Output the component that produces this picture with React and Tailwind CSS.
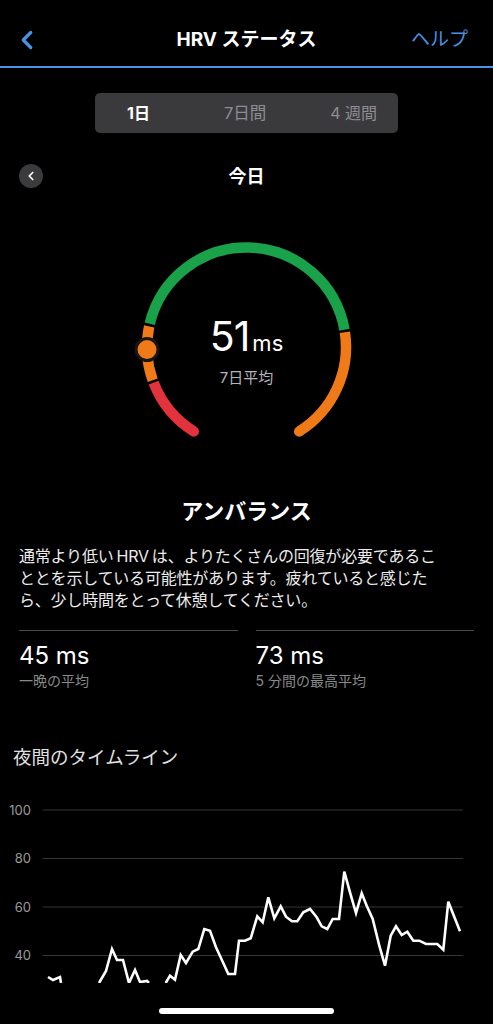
import { ChevronLeft } from "lucide-react";

const FONT = { fontFamily: 'Inter, "Noto Sans CJK JP", sans-serif' };

const CX = 246.5;
const CY = 159;
const R = 99.5;

function pt(deg) {
    const a = (deg * Math.PI) / 180;
    return [CX + R * Math.sin(a), CY - R * Math.cos(a)];
}

function arc(a1, a2) {
    const [x1, y1] = pt(a1);
    const [x2, y2] = pt(a2);
    const large = a2 - a1 > 180 ? 1 : 0;
    return `M ${x1} ${y1} A ${R} ${R} 0 ${large} 1 ${x2} ${y2}`;
}

const GREEN = "#1aa24a";
const ORANGE = "#f07a17";
const RED = "#e2323c";

// nightly timeline, page coordinates
const segs = [
    [[48, 978], [53, 981], [60, 978], [61, 984]],
    [[99, 984], [106, 972], [112, 950], [117, 961], [123, 961], [129, 984], [135, 971], [140, 983], [147, 982], [149, 984]],
    [
        [165.7, 984], [170, 976.7], [175, 980.7], [180.7, 956], [186, 964], [192.7, 952.7], [198.3, 950], [204.3, 930],
        [210, 931.7], [216, 948.3], [222.7, 962.7], [228.3, 975], [235, 975], [239, 941.7], [245, 941.7], [250.7, 939.3],
        [257.3, 917.3], [262.7, 923.3], [268.3, 898.3], [274.3, 919.3], [280.7, 907.3], [286, 917.7], [292, 922.3],
        [297.3, 922.3], [303.3, 913.3], [310, 910], [316.7, 918.3], [321.7, 927.3], [327.3, 930], [332.7, 920], [339, 920],
        [344.3, 872.7], [350, 893.3], [356, 914], [361.7, 894.3], [366.7, 906.7], [372.7, 920], [379.3, 946.7],
        [385, 966.7], [390.7, 936.7], [396, 927.3], [401.7, 936], [407.3, 932.7], [413.3, 941.7], [419.3, 941.7],
        [426, 945], [432.7, 945], [437.3, 945], [443.3, 950.7], [448.3, 902.7], [460, 932.3],
    ],
];

const grid = [
    { v: "100", y: 811 },
    { v: "80", y: 859.5 },
    { v: "60", y: 908 },
    { v: "40", y: 956.5 },
];

function Gauge() {
    const [sx, sy] = pt(-148);
    const [ex, ey] = pt(148);
    const [mx, my] = pt(-91.5);
    return (
        <div className="relative h-[260px]">
            <svg width="493" height="260" className="block">
                <path d={arc(-148, -111)} stroke={RED} strokeWidth="10.5" fill="none" />
                <path d={arc(-109.5, -78)} stroke={ORANGE} strokeWidth="10.5" fill="none" />
                <path d={arc(-76.5, 80)} stroke={GREEN} strokeWidth="10.5" fill="none" />
                <path d={arc(81.5, 148)} stroke={ORANGE} strokeWidth="10.5" fill="none" />
                <circle cx={sx} cy={sy} r="5.25" fill={RED} />
                <circle cx={ex} cy={ey} r="5.25" fill={ORANGE} />
                <circle cx={mx} cy={my} r="11" fill={ORANGE} stroke="#161616" strokeWidth="3" />
            </svg>
            <div className="absolute inset-x-0 top-[128px] flex flex-col items-center">
                <div className="flex items-baseline text-white">
                    <span className="text-[41px] leading-[40px] tracking-[-1px]">51</span>
                    <span className="text-[22px] leading-[40px] ml-[3px]">ms</span>
                </div>
                <div className="mt-[5px] text-[15px] leading-[20px] text-[#b5b5b5]">7日平均</div>
            </div>
        </div>
    );
}

function Chart() {
    return (
        <svg width="493" height="234" viewBox="0 790 493 234" className="block">
            <defs>
                <clipPath id="plot">
                    <rect x="0" y="790" width="493" height="194" />
                </clipPath>
            </defs>
            {grid.map((g) => (
                <g key={g.v}>
                    <line x1="42.5" x2="463" y1={g.y} y2={g.y} stroke="#353535" strokeWidth="1" />
                    <text x="31" y={g.y + 4.5} textAnchor="end" fontSize="13" fill="#9a9a9a" style={FONT}>
                        {g.v}
                    </text>
                </g>
            ))}
            <g clipPath="url(#plot)">
                {segs.map((s, i) => (
                    <polyline
                        key={i}
                        points={s.map((p) => p.join(",")).join(" ")}
                        fill="none"
                        stroke="#ffffff"
                        strokeWidth="2.6"
                        strokeLinejoin="miter"
                    />
                ))}
            </g>
        </svg>
    );
}

export default function App() {
    return (
        <div className="relative h-[1024px] w-[493px] overflow-hidden bg-black text-white" style={FONT}>
            {/* header */}
            <div className="grid h-[66px] grid-cols-[1fr_auto_1fr] items-center pt-[14px] px-[12px]">
                <ChevronLeft size={30} strokeWidth={2.6} className="text-[#4a92e3]" />
                <div className="text-[19px] font-bold leading-[26px]">HRV ステータス</div>
                <div className="mr-[13px] justify-self-end text-[19px] leading-[26px] text-[#4a92e3]">ヘルプ</div>
            </div>
            <div className="h-[2px] bg-[#4a92e3]" />

            {/* range tabs */}
            <div className="mt-[25px] flex justify-center">
                <div className="flex h-[40px] w-[303px] items-center rounded-[5px] bg-[#3a3a3c] pl-[32px] text-[16px]">
                    <span className="font-bold text-white">1日</span>
                    <span className="ml-[74px] text-[16.5px] text-[#8d8d92]">7日間</span>
                    <span className="ml-[64px] text-[#8d8d92]">4 週間</span>
                </div>
            </div>

            {/* day row */}
            <div className="relative mt-[31px] flex h-[24px] items-center justify-center">
                <div className="absolute left-[19px] top-0 flex h-[24px] w-[24px] items-center justify-center rounded-full bg-[#3b3b3d]">
                    <ChevronLeft size={14} strokeWidth={3} className="text-white" />
                </div>
                <span className="text-[18px] font-bold">今日</span>
            </div>

            <Gauge />

            <div className="mt-[48px] text-center text-[22px] font-bold leading-[30px]">アンバランス</div>

            <div className="mt-[19px] px-[19px] text-[16px] leading-[22px] tracking-[-0.2px] text-[#ececec]">
                <div>
                    通常より低い<span className="mx-[3px]">HRV</span>は、よりたくさんの回復が必要であるこ
                </div>
                <div>ととを示している可能性があります。疲れていると感じた</div>
                <div>ら、少し時間をとって休憩してください。</div>
            </div>

            {/* stats */}
            <div className="mt-[19px] grid grid-cols-2 gap-[18px] px-[19px]">
                <div className="border-t border-[#4a4a4a] pt-[10px]">
                    <div className="text-[24px] leading-[30px]">45 ms</div>
                    <div className="mt-[1px] text-[14px] leading-[18px] text-[#8a8a8a]">一晩の平均</div>
                </div>
                <div className="border-t border-[#4a4a4a] pt-[10px]">
                    <div className="text-[24px] leading-[30px]">73 ms</div>
                    <div className="mt-[1px] text-[14px] leading-[18px] text-[#8a8a8a]">5 分間の最高平均</div>
                </div>
            </div>

            <div className="mt-[55px] pl-[13px] text-[18.5px] leading-[24px] text-[#e0e0e0]">夜間のタイムライン</div>

            <div className="mt-[20px]">
                <Chart />
            </div>

            <div className="absolute left-[159px] top-[1008px] h-[6px] w-[175px] rounded-full bg-white" />
        </div>
    );
}
